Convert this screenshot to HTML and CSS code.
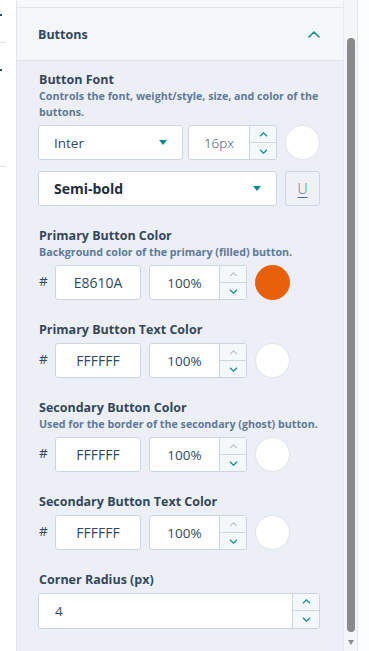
FILE: index.html
```html
<!DOCTYPE html>
<html>
<head>
<meta charset="utf-8">
<link rel="stylesheet" href="styles.css">
</head>
<body>
<div class="app">
  <div class="left-strip">
    <span class="dot dot-a"></span>
    <span class="rule rule-a"></span>
    <span class="dot dot-b"></span>
    <span class="rule rule-b"></span>
  </div>
  <div class="panel">
    <div class="panel-top"></div>
    <div class="section-header">
      <span class="section-title">Buttons</span>
      <svg class="header-chevron" width="12" height="7" viewBox="0 0 12 7"><path d="M1 6 L6 1 L11 6" fill="none" stroke="#0b8a8f" stroke-width="1.5" stroke-linecap="round" stroke-linejoin="round"/></svg>
    </div>
    <div class="section-body">
      <div class="field">
        <div class="label">Button Font</div>
        <div class="desc">Controls the font, weight/style, size, and color of the<br>buttons.</div>
        <div class="row">
          <div class="select select-font"><span class="select-text">Inter</span><span class="caret"></span></div>
          <div class="num num-size">
            <span class="num-text light">16px</span>
            <div class="stepper">
              <span class="step"><svg width="9" height="5" viewBox="0 0 9 5"><path d="M1 4.2 L4.5 0.8 L8 4.2" fill="none" stroke="#0b8a8f" stroke-width="1.2"/></svg></span>
              <span class="step"><svg width="9" height="5" viewBox="0 0 9 5"><path d="M1 0.8 L4.5 4.2 L8 0.8" fill="none" stroke="#0b8a8f" stroke-width="1.2"/></svg></span>
            </div>
          </div>
          <div class="swatch"></div>
        </div>
        <div class="row row-second">
          <div class="select select-weight"><span class="select-text bold">Semi-bold</span><span class="caret"></span></div>
          <div class="icon-btn"><span class="u">U</span></div>
        </div>
      </div>

      <div class="field">
        <div class="label">Primary Button Color</div>
        <div class="desc">Background color of the primary (filled) button.</div>
        <div class="row">
          <span class="hash">#</span>
          <div class="hex">E8610A</div>
          <div class="num num-pct">
            <span class="num-text">100%</span>
            <div class="stepper">
              <span class="step"><svg width="9" height="5" viewBox="0 0 9 5"><path d="M1 4.2 L4.5 0.8 L8 4.2" fill="none" stroke="#b4c0cc" stroke-width="1.1"/></svg></span>
              <span class="step"><svg width="9" height="5" viewBox="0 0 9 5"><path d="M1 0.8 L4.5 4.2 L8 0.8" fill="none" stroke="#0b8a8f" stroke-width="1.2"/></svg></span>
            </div>
          </div>
          <div class="swatch swatch-small orange"></div>
        </div>
      </div>

      <div class="field">
        <div class="label">Primary Button Text Color</div>
        <div class="row">
          <span class="hash">#</span>
          <div class="hex">FFFFFF</div>
          <div class="num num-pct">
            <span class="num-text">100%</span>
            <div class="stepper">
              <span class="step"><svg width="9" height="5" viewBox="0 0 9 5"><path d="M1 4.2 L4.5 0.8 L8 4.2" fill="none" stroke="#b4c0cc" stroke-width="1.1"/></svg></span>
              <span class="step"><svg width="9" height="5" viewBox="0 0 9 5"><path d="M1 0.8 L4.5 4.2 L8 0.8" fill="none" stroke="#0b8a8f" stroke-width="1.2"/></svg></span>
            </div>
          </div>
          <div class="swatch swatch-small"></div>
        </div>
      </div>

      <div class="field">
        <div class="label">Secondary Button Color</div>
        <div class="desc">Used for the border of the secondary (ghost) button.</div>
        <div class="row">
          <span class="hash">#</span>
          <div class="hex">FFFFFF</div>
          <div class="num num-pct">
            <span class="num-text">100%</span>
            <div class="stepper">
              <span class="step"><svg width="9" height="5" viewBox="0 0 9 5"><path d="M1 4.2 L4.5 0.8 L8 4.2" fill="none" stroke="#b4c0cc" stroke-width="1.1"/></svg></span>
              <span class="step"><svg width="9" height="5" viewBox="0 0 9 5"><path d="M1 0.8 L4.5 4.2 L8 0.8" fill="none" stroke="#0b8a8f" stroke-width="1.2"/></svg></span>
            </div>
          </div>
          <div class="swatch swatch-small"></div>
        </div>
      </div>

      <div class="field">
        <div class="label">Secondary Button Text Color</div>
        <div class="row">
          <span class="hash">#</span>
          <div class="hex">FFFFFF</div>
          <div class="num num-pct">
            <span class="num-text">100%</span>
            <div class="stepper">
              <span class="step"><svg width="9" height="5" viewBox="0 0 9 5"><path d="M1 4.2 L4.5 0.8 L8 4.2" fill="none" stroke="#b4c0cc" stroke-width="1.1"/></svg></span>
              <span class="step"><svg width="9" height="5" viewBox="0 0 9 5"><path d="M1 0.8 L4.5 4.2 L8 0.8" fill="none" stroke="#0b8a8f" stroke-width="1.2"/></svg></span>
            </div>
          </div>
          <div class="swatch swatch-small"></div>
        </div>
      </div>

      <div class="field">
        <div class="label">Corner Radius (px)</div>
        <div class="row">
          <div class="num num-full">
            <span class="num-text left">4</span>
            <div class="stepper">
              <span class="step"><svg width="9" height="5" viewBox="0 0 9 5"><path d="M1 4.2 L4.5 0.8 L8 4.2" fill="none" stroke="#0b8a8f" stroke-width="1.2"/></svg></span>
              <span class="step"><svg width="9" height="5" viewBox="0 0 9 5"><path d="M1 0.8 L4.5 4.2 L8 0.8" fill="none" stroke="#0b8a8f" stroke-width="1.2"/></svg></span>
            </div>
          </div>
        </div>
      </div>
    </div>
  </div>
  <div class="scrollbar">
    <div class="thumb"></div>
    <div class="scroll-arrow"></div>
  </div>
  <div class="right-strip"></div>
</div>
</body>
</html>
```

FILE: styles.css
```css
* { box-sizing: border-box; }
html, body { margin: 0; padding: 0; }
body {
  width: 369px;
  height: 651px;
  overflow: hidden;
  background: #ffffff;
  font-family: "Open Sans", "Noto Sans", sans-serif;
  color: #33475b;
}
.app {
  display: flex;
  height: 651px;
}
.left-strip {
  width: 16px;
  flex: none;
  background: #ffffff;
  display: flex;
  flex-direction: column;
}
.dot { display: block; width: 2px; height: 2px; background: #33475b; }
.dot-a { margin-top: 14px; }
.rule { display: block; width: 6px; height: 1px; background: #dfe3eb; }
.rule-a { margin-top: 26px; }
.dot-b { margin-top: 26px; }
.rule-b { margin-top: 95px; }

.panel {
  width: 327px;
  flex: none;
  border-left: 1px solid #e1e6ec;
  display: flex;
  flex-direction: column;
  background: #ecf0f6;
}
.panel-top {
  height: 8px;
  background: #f6f8fa;
  border-bottom: 1px solid #dfe3eb;
}
.section-header {
  height: 53px;
  background: #f4f7fa;
  border-bottom: 1px solid #dfe3eb;
  display: flex;
  align-items: center;
  justify-content: space-between;
  padding: 0 23px 0 21px;
}
.section-title {
  font-size: 12.5px;
  font-weight: 700;
  color: #33475b;
}
.header-chevron { display: block; }

.section-body {
  padding: 10px 22px 0 21px;
}
.field { margin-bottom: 21px; }
.label {
  font-size: 12.5px;
  font-weight: 700;
  line-height: 17px;
  color: #33475b;
  padding-left: 1px;
}
.desc {
  font-size: 10.7px;
  font-weight: 700;
  line-height: 16px;
  color: #5e7a98;
  padding-left: 1px;
  white-space: nowrap;
}
.row {
  display: flex;
  align-items: center;
  margin-top: 5px;
  height: 35px;
}
.row-second { margin-top: 11px; }

.select {
  height: 35px;
  background: #ffffff;
  border: 1px solid #cbd6e2;
  border-radius: 3px;
  display: flex;
  align-items: center;
  justify-content: space-between;
  padding: 0 15px 0 15px;
}
.select-font { width: 145px; margin-right: 5px; }
.select-weight { width: 239px; margin-right: 8px; }
.select-text { font-size: 13.5px; color: #33475b; }
.select-text.bold { font-weight: 700; color: #1f2d3b; font-size: 14px; }
.caret {
  width: 0; height: 0;
  border-left: 4px solid transparent;
  border-right: 4px solid transparent;
  border-top: 5px solid #0b8a8f;
}

.num {
  height: 35px;
  background: #ffffff;
  border: 1px solid #cbd6e2;
  border-radius: 3px;
  display: flex;
  overflow: hidden;
}
.num-size { width: 89px; margin-right: 8px; }
.num-pct { width: 98px; margin-right: 8px; }
.num-full { width: 282px; height: 36px; }
.num-text {
  flex: 1;
  display: flex;
  align-items: center;
  justify-content: center;
  font-size: 13.5px;
  color: #33475b;
}
.num-text.light { font-weight: 300; }
.num-text.left { justify-content: flex-start; padding-left: 16px; }
.stepper {
  width: 27px;
  flex: none;
  border-left: 1px solid #cbd6e2;
  background: #f5f8fa;
  display: flex;
  flex-direction: column;
}
.step {
  flex: 1;
  display: flex;
  align-items: center;
  justify-content: center;
}
.step + .step { border-top: 1px solid #cbd6e2; }
.step svg { display: block; }

.swatch {
  width: 35px;
  height: 35px;
  border-radius: 50%;
  background: #ffffff;
  border: 1px solid #dfe3eb;
  flex: none;
}
.orange { background: #e8610a; border-color: #e8610a; }

.icon-btn {
  width: 35px;
  height: 35px;
  background: #eef2f7;
  border: 1px solid #cbd6e2;
  border-radius: 3px;
  display: flex;
  align-items: center;
  justify-content: center;
}
.u {
  font-size: 14px;
  font-weight: 300;
  color: #516f90;
  text-decoration: underline;
  text-underline-offset: 3px;
}

.hash {
  width: 17px;
  flex: none;
  font-size: 13.5px;
  color: #33475b;
  padding-left: 1px;
  margin-top: -3px;
}
.hex {
  width: 86px;
  height: 35px;
  background: #ffffff;
  border: 1px solid #cbd6e2;
  border-radius: 3px;
  margin-right: 8px;
  display: flex;
  align-items: center;
  justify-content: center;
  font-size: 14px;
  color: #33475b;
  flex: none;
}

.scrollbar {
  width: 14px;
  flex: none;
  background: #f3f5f8;
  border-left: 1px solid #e6eaef;
  display: flex;
  flex-direction: column;
  align-items: center;
  padding-top: 38px;
}
.thumb {
  width: 8px;
  height: 594px;
  border-radius: 4px;
  background: #8a8a8a;
}
.scroll-arrow {
  margin-top: 8px;
  width: 0; height: 0;
  border-left: 3.5px solid transparent;
  border-right: 3.5px solid transparent;
  border-top: 5px solid #8a8a8a;
}
.right-strip {
  flex: 1;
  background: #fbfcfd;
  border-left: 1px solid #e3e7ec;
}
```
